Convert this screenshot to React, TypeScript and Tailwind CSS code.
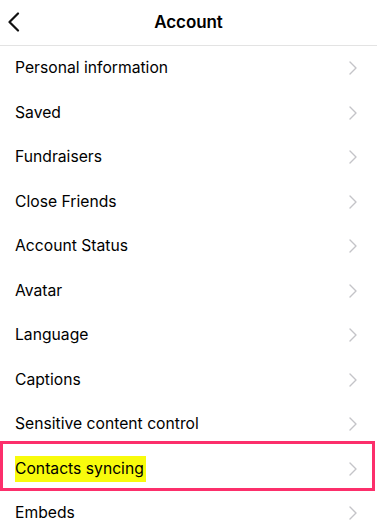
import React from 'react';

const items = [
  'Personal information',
  'Saved',
  'Fundraisers',
  'Close Friends',
  'Account Status',
  'Avatar',
  'Language',
  'Captions',
  'Sensitive content control',
  'Contacts syncing',
  'Embeds',
];

const Chevron = () => (
  <svg width="8" height="14" viewBox="0 0 8 14" fill="none" className="shrink-0">
    <path d="M1 1l6 6-6 6" stroke="#c4c4c8" strokeWidth="1.4" strokeLinecap="round" strokeLinejoin="round" />
  </svg>
);

export default function App() {
  return (
    <div className="w-[377px] h-[529px] overflow-hidden bg-white text-black" style={{ fontFamily: 'Inter, "Liberation Sans", sans-serif' }}>
      <div className="relative h-[46px] flex items-center justify-center border-b border-[#e3e3e3]">
        <svg width="14" height="20" viewBox="0 0 14 20" fill="none" className="absolute left-[7px] top-[12px]">
          <path d="M11 1.5L2.5 10l8.5 8.5" stroke="#111" strokeWidth="2.2" strokeLinecap="round" strokeLinejoin="round" />
        </svg>
        <span className="text-[17px] font-semibold tracking-[-0.1px]">Account</span>
      </div>
      <div className="flex flex-col">
        {items.map((label) => {
          const active = label === 'Contacts syncing';
          return (
            <div
              key={label}
              className="relative h-[44.5px] flex items-center justify-between pl-[15px] pr-[20px]"
            >
              <span className={`text-[15.7px] leading-[26px] ${active ? 'bg-[#f8fb0c] pr-[2px]' : ''}`}>{label}</span>
              <Chevron />
              {active && (
                <div className="absolute left-0 right-[2px] top-[-6px] bottom-0 border-[3px] border-[#fc2f6b] pointer-events-none" />
              )}
            </div>
          );
        })}
      </div>
    </div>
  );
}
